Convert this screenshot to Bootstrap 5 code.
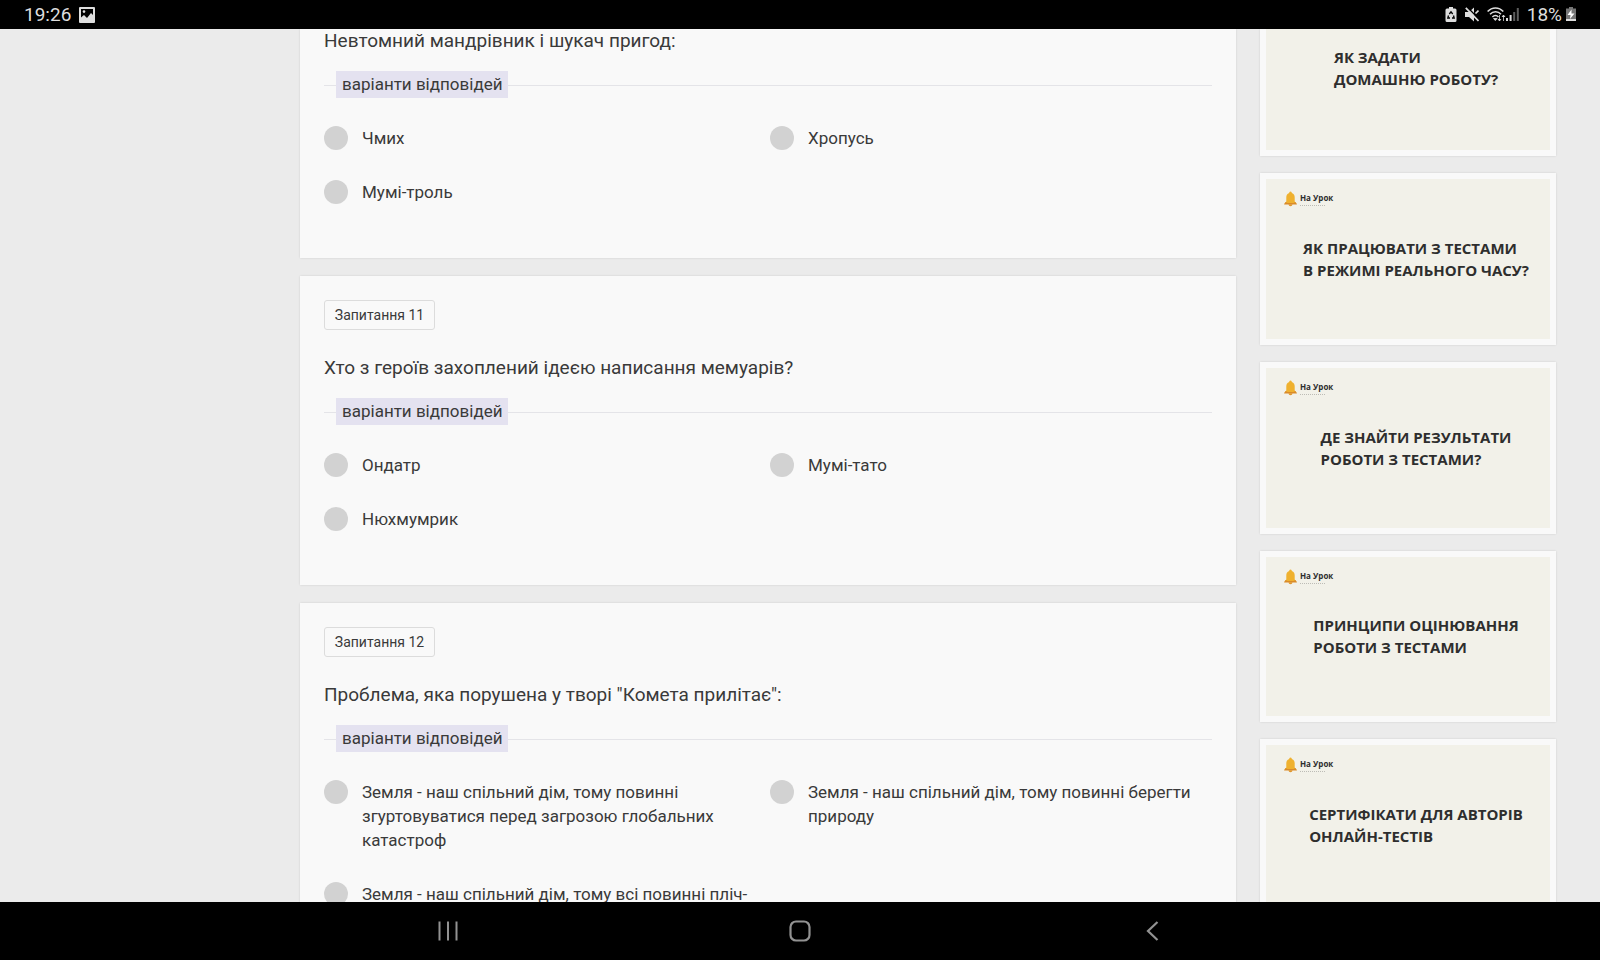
<!DOCTYPE html>
<html lang="uk">
<head>
<meta charset="utf-8">
<meta name="viewport" content="width=device-width, initial-scale=1">
<title>На Урок – тест</title>
<link href="https://cdn.jsdelivr.net/npm/bootstrap@5.3.0/dist/css/bootstrap.min.css" rel="stylesheet">
<style>
  body { background: #ebebeb; color: #3a3a3a; font-family: Roboto, "Noto Sans", sans-serif; }
  .status-bar { height: 29px; padding: 0 24px; background: #000; color: #dedede; font-size: 19px; line-height: 29px; }
  .page-body { min-height: 0; padding: 0 2.75% 0 18.75%; gap: 24px; }
  .questions { gap: 18px; min-width: 0; }
  .panel { background: #f9f9f9; box-shadow: 0 0 2px rgba(0, 0, 0, .12); }
  .question { padding: 24px 24px 54px; }
  .question.cut-top { padding-top: 0; }
  .question-no { height: 30px; width: 111px; border: 1px solid #dcdcdc; border-radius: 3px; font-size: 14px; line-height: 28px; margin-bottom: 26px; }
  .question-title { font-size: 19px; line-height: 24px; font-weight: 400; margin: 0 0 18px; }
  .divider { margin-bottom: 28px; font-size: 17px; line-height: 27px; }
  .divider::before, .divider::after { content: ""; height: 1px; background: #e4e4e8; margin-top: 2px; }
  .divider::before { width: 12px; }
  .divider::after { flex: 1; }
  .divider span { background: #e4e2f0; padding: 0 6px; }
  .answers { display: grid; grid-template-columns: 1fr 1fr; gap: 30px 4px; font-size: 17px; line-height: 24px; }
  .answers label { padding-right: 8px; }
  .answers input { appearance: none; flex: none; width: 24px; height: 24px; border-radius: 50%; background: #d2d2d2; margin: 0 14px 0 0; }
  .answers input:checked { background: #7a6fb0; }
  .tips { width: 296px; gap: 17px; flex: none; }
  .tip { padding: 6px; }
  .tip.cut-top { padding-top: 0; }
  .tip a { display: grid; grid-template-rows: 1fr auto 1fr; aspect-ratio: 16 / 9; background: #f2f1e9; color: #2e2e2e; text-decoration: none; }
  .tip.cut-top a { aspect-ratio: auto; grid-template-rows: auto; padding: 17px 0 60px; }
  .tip-title { justify-self: center; margin-left: 16px; font: 700 15px/22px "Open Sans", "Noto Sans", sans-serif; white-space: nowrap; }
  .logo { padding: 12px 0 0 18px; gap: 3px; }
  .logo-name { font: 700 8px/10px "Open Sans", "Noto Sans", sans-serif; margin-top: 2px; }
  .logo-line { width: 25px; border-top: 1px dotted #bdbcb6; margin-top: 2px; }
  .nav-keys { height: 58px; background: #000; }
  .nav-keys button { width: 22%; border: 0; background: none; color: #929292; padding: 0; line-height: 0; }
</style>
</head>
<body class="vh-100 d-flex flex-column overflow-hidden">

<svg class="d-none" aria-hidden="true">
  <symbol id="bell" viewBox="0 0 13 16">
    <path d="M6.500 .5C5.500 .5 5.300 1.300 5.200 2 3 2.700 2.300 4.500 2.300 6.500V10.500L.3 13H12.700L10.700 10.500V6.500C10.700 4.500 10 2.700 7.800 2 7.700 1.300 7.500 .5 6.500 .5Z" fill="#efb12f"/>
    <path d="M1.500 11 0 13.500H13L11.500 11 9.500 12H3.500Z" fill="#d98b2b"/>
    <path d="M4.500 13.300H8.500C8.500 14.600 7.500 15.300 6.500 15.300S4.500 14.600 4.500 13.300Z" fill="#e0962c"/>
  </symbol>
</svg>

<header class="status-bar d-flex align-items-center flex-shrink-0">
  <span class="me-2">19:26</span>
  <svg width="16" height="16" viewBox="0 0 16 16" role="img" aria-label="Знімок"><path fill="#dedede" d="M1 0h14a1 1 0 0 1 1 1v14a1 1 0 0 1-1 1H1a1 1 0 0 1-1-1V1a1 1 0 0 1 1-1Z"/><path d="M2 2h12v6l-2-2-4 5-3-3-3 2.500Z" fill="#000"/><circle cx="5" cy="4.600" r="1.300" fill="#dedede"/></svg>
  <svg class="ms-auto" width="12" height="15" viewBox="0 0 12 15" aria-hidden="true"><path fill="#dedede" d="M4 0h4v1.500h2A1.500 1.500 0 0 1 11.500 3v10.500A1.500 1.500 0 0 1 10 15H2A1.500 1.500 0 0 1 .5 13.500V3A1.500 1.500 0 0 1 2 1.500h2Z"/><path d="M4.300 7 6 4.800 7.700 7M8.500 8.500 9.200 11H7M5 11H2.800L3.500 8.500" fill="none" stroke="#000" stroke-width="1.300"/></svg>
  <svg class="ms-2" width="14" height="15" viewBox="0 0 14 15" aria-hidden="true"><path fill="#dedede" d="M0 5h4l5-4.500v14L4 10H0Z"/><path d="M1.500 -.5 14.500 12.500" stroke="#000" stroke-width="1.500"/><path d="M.8 .8 13.500 14M10.500 6.500 13.500 3.500" stroke="#dedede" stroke-width="1.700"/></svg>
  <svg class="ms-2" width="19" height="15" viewBox="0 0 19 15" aria-hidden="true"><g fill="none" stroke="#dedede" stroke-width="1.500"><path d="M.6 4.600C5-.3 12-.3 16.300 4.600M3 7.300c3.200-3.500 8-3.500 11 0M5.400 9.900c1.800-2 4.300-2 6 0"/></g><path d="M6.500 11.500h3.600L8.300 13.500ZM12.500 8v6M11 12l1.500 2 1.500-2M16.500 14V8M15 10l1.500-2 1.500 2" fill="#dedede" stroke="#dedede" stroke-width=".8"/></svg>
  <svg class="me-2" width="13" height="13" viewBox="0 0 13 13" aria-hidden="true"><path d="M0 10h2v3H0ZM3.600 7h2v6h-2Z" fill="#dedede"/><path d="M7.200 4h2v9h-2ZM10.800 0h2v13h-2Z" fill="#5d5d5d"/></svg>
  <span>18%</span>
  <svg class="ms-1" width="10" height="15" viewBox="0 0 10 15" aria-hidden="true"><path fill="#777" d="M3 0h4v1.500h3V12H0V1.500h3Z"/><path fill="#dedede" d="M0 12h10v2H0Z"/><path fill="#fff" d="M5.500 2.500 1.500 8h3L4 12l4.500-5.500h-3Z"/></svg>
</header>

<main class="page-body d-flex align-items-start flex-grow-1 overflow-hidden">
  <div class="questions d-flex flex-column flex-grow-1">

    <section class="panel question cut-top">
      <h2 class="question-title">Невтомний мандрівник і шукач пригод:</h2>
      <div class="divider d-flex align-items-center"><span>варіанти відповідей</span></div>
      <div class="answers">
        <label class="d-flex"><input type="radio" name="q10">Чмих</label>
        <label class="d-flex"><input type="radio" name="q10">Хропусь</label>
        <label class="d-flex"><input type="radio" name="q10">Мумі-троль</label>
      </div>
    </section>

    <section class="panel question">
      <div class="question-no text-center">Запитання 11</div>
      <h2 class="question-title">Хто з героїв захоплений ідеєю написання мемуарів?</h2>
      <div class="divider d-flex align-items-center"><span>варіанти відповідей</span></div>
      <div class="answers">
        <label class="d-flex"><input type="radio" name="q11">Ондатр</label>
        <label class="d-flex"><input type="radio" name="q11">Мумі-тато</label>
        <label class="d-flex"><input type="radio" name="q11">Нюхмумрик</label>
      </div>
    </section>

    <section class="panel question">
      <div class="question-no text-center">Запитання 12</div>
      <h2 class="question-title">Проблема, яка порушена у творі "Комета прилітає":</h2>
      <div class="divider d-flex align-items-center"><span>варіанти відповідей</span></div>
      <div class="answers">
        <label class="d-flex"><input type="radio" name="q12">Земля - наш спільний дім, тому повинні згуртовуватися перед загрозою глобальних катастроф</label>
        <label class="d-flex"><input type="radio" name="q12">Земля - наш спільний дім, тому повинні берегти природу</label>
        <label class="d-flex"><input type="radio" name="q12">Земля - наш спільний дім, тому всі повинні пліч-</label>
      </div>
    </section>
  </div>

  <aside class="tips d-flex flex-column">
    <div class="panel tip cut-top"><a href="#"><span class="tip-title">ЯК ЗАДАТИ<br>ДОМАШНЮ РОБОТУ?</span></a></div>
    <div class="panel tip"><a href="#">
      <span class="logo d-flex align-items-start"><svg width="13" height="16" aria-hidden="true"><use href="#bell"/></svg><span><span class="logo-name d-block">На Урок</span><span class="logo-line d-block"></span></span></span>
      <span class="tip-title">ЯК ПРАЦЮВАТИ З ТЕСТАМИ<br>В РЕЖИМІ РЕАЛЬНОГО ЧАСУ?</span></a></div>
    <div class="panel tip"><a href="#">
      <span class="logo d-flex align-items-start"><svg width="13" height="16" aria-hidden="true"><use href="#bell"/></svg><span><span class="logo-name d-block">На Урок</span><span class="logo-line d-block"></span></span></span>
      <span class="tip-title">ДЕ ЗНАЙТИ РЕЗУЛЬТАТИ<br>РОБОТИ З ТЕСТАМИ?</span></a></div>
    <div class="panel tip"><a href="#">
      <span class="logo d-flex align-items-start"><svg width="13" height="16" aria-hidden="true"><use href="#bell"/></svg><span><span class="logo-name d-block">На Урок</span><span class="logo-line d-block"></span></span></span>
      <span class="tip-title">ПРИНЦИПИ ОЦІНЮВАННЯ<br>РОБОТИ З ТЕСТАМИ</span></a></div>
    <div class="panel tip"><a href="#">
      <span class="logo d-flex align-items-start"><svg width="13" height="16" aria-hidden="true"><use href="#bell"/></svg><span><span class="logo-name d-block">На Урок</span><span class="logo-line d-block"></span></span></span>
      <span class="tip-title">СЕРТИФІКАТИ ДЛЯ АВТОРІВ<br>ОНЛАЙН-ТЕСТІВ</span></a></div>
  </aside>
</main>

<nav class="nav-keys d-flex justify-content-center align-items-center flex-shrink-0">
  <button type="button" aria-label="Останні"><svg width="20" height="20" viewBox="0 0 20 20"><path d="M1.500 .5v19M10 .5v19M18.500 .5v19" stroke="currentColor" stroke-width="2"/></svg></button>
  <button type="button" aria-label="Головний екран"><svg width="22" height="22" viewBox="0 0 22 22"><rect x="1.500" y="1.500" width="19" height="19" rx="5.500" fill="none" stroke="currentColor" stroke-width="2.200"/></svg></button>
  <button type="button" aria-label="Назад"><svg width="13" height="20" viewBox="0 0 13 20"><path d="M11.500 1 2 10l9.500 9" fill="none" stroke="currentColor" stroke-width="2.200"/></svg></button>
</nav>

<script src="https://cdn.jsdelivr.net/npm/bootstrap@5.3.0/dist/js/bootstrap.bundle.min.js"></script>
</body>
</html>
